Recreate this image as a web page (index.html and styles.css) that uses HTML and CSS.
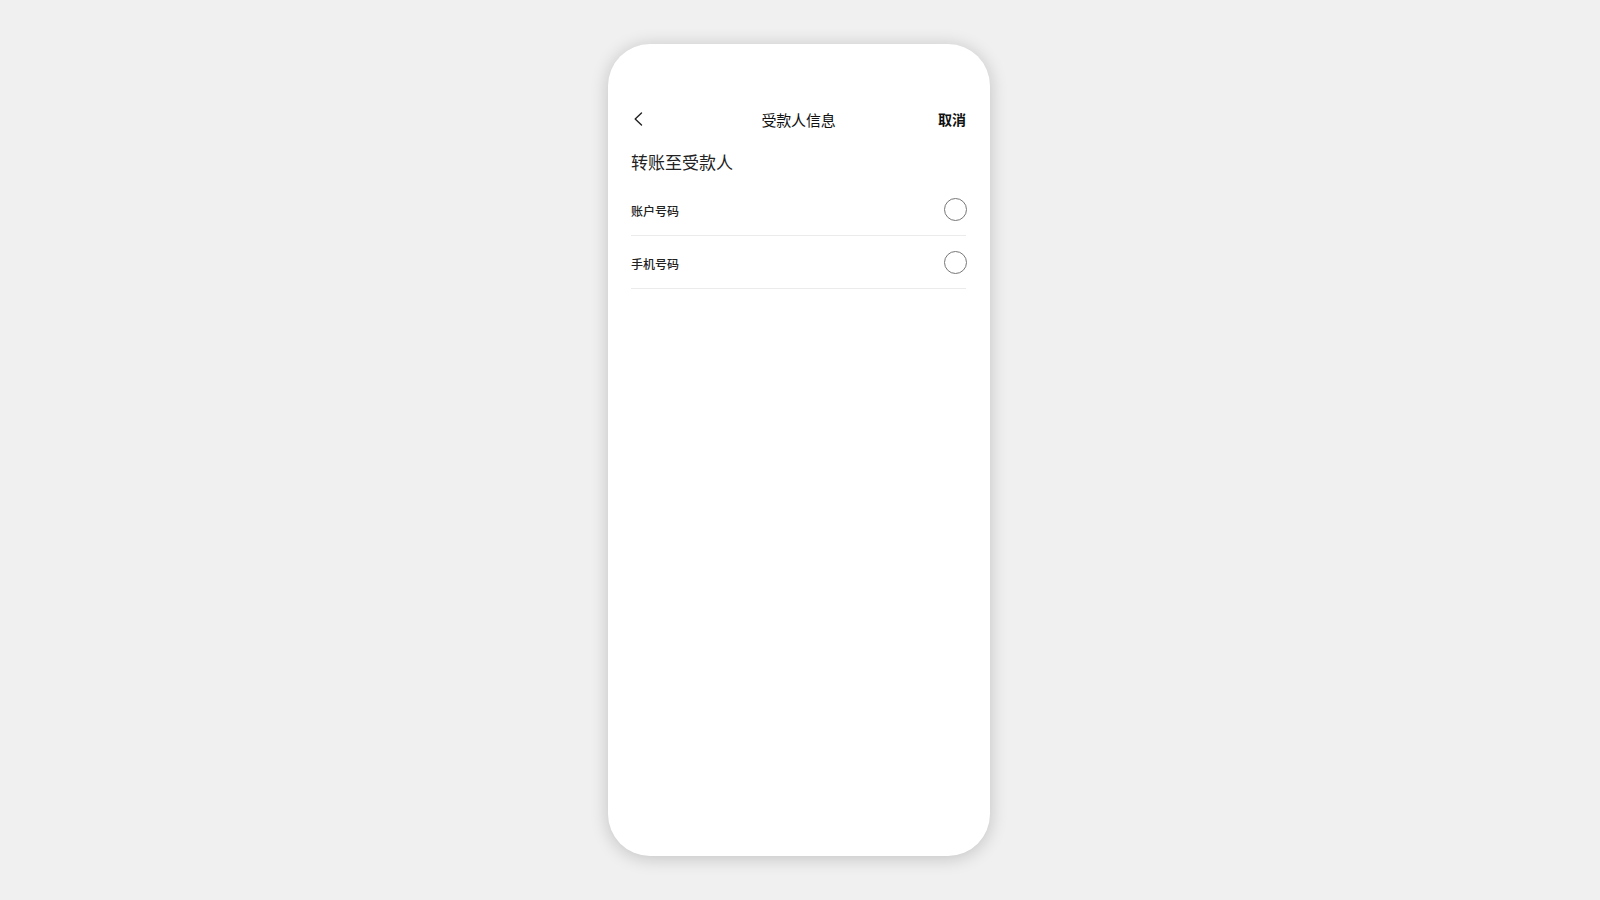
FILE: index.html
```html
<!DOCTYPE html>
<html lang="zh-CN">
<head>
<meta charset="utf-8">
<title>受款人信息</title>
<link rel="stylesheet" href="styles.css">
</head>
<body>
<div class="stage">
  <div class="phone">
    <div class="status"></div>
    <div class="navbar">
      <span class="back">
        <svg width="10" height="14" viewBox="0 0 10 14"><path d="M8.5 1 L2.2 7 L8.5 13" fill="none" stroke="#222" stroke-width="1.4" stroke-linecap="round" stroke-linejoin="round"/></svg>
      </span>
      <span class="title">受款人信息</span>
      <span class="cancel">取消</span>
    </div>
    <div class="content">
      <h2 class="heading">转账至受款人</h2>
      <ul class="options">
        <li class="option"><span class="label">账户号码</span><span class="radio"></span></li>
        <li class="option"><span class="label">手机号码</span><span class="radio"></span></li>
      </ul>
    </div>
  </div>
</div>
</body>
</html>
```

FILE: styles.css
```css
* { box-sizing: border-box; }
html, body {
  margin: 0;
  padding: 0;
  height: 100%;
}
body {
  background: #f0f0f0;
  font-family: "Noto Sans CJK SC", "Noto Sans", sans-serif;
  color: #222;
}
.stage {
  width: 1600px;
  height: 900px;
  padding: 0 2px 0 0;
  display: flex;
  align-items: center;
  justify-content: center;
}
.phone {
  width: 382px;
  height: 812px;
  background: #fff;
  border-radius: 42px;
  box-shadow: 0 2px 18px rgba(0, 0, 0, 0.2);
  display: flex;
  flex-direction: column;
  overflow: hidden;
}
.status {
  height: 53px;
  flex: none;
}
.navbar {
  height: 44px;
  padding: 0 24px 0 23px;
  display: flex;
  align-items: center;
  justify-content: space-between;
}
.back {
  display: flex;
  align-items: center;
  width: 40px;
  padding-left: 2px;
}
.title {
  font-size: 15px;
  color: #111;
  font-weight: 400;
  letter-spacing: -0.2px;
}
.cancel {
  width: 40px;
  text-align: right;
  font-size: 14px;
  font-weight: 700;
  color: #111;
}
.content {
  padding: 0 24px 0 23px;
}
.heading {
  margin: 9px 0 9px;
  font-size: 17px;
  line-height: 24px;
  font-weight: 400;
  color: #222;
}
.options {
  list-style: none;
  margin: 0;
  padding: 0;
}
.option {
  height: 53px;
  border-bottom: 1px solid #ebebeb;
  display: flex;
  align-items: center;
  justify-content: space-between;
}
.label {
  font-size: 12px;
  font-weight: 500;
  color: #222;
  padding-top: 2px;
}
.radio {
  width: 23px;
  height: 23px;
  border: 1px solid #777;
  border-radius: 50%;
  margin-right: -1px;
}
```
